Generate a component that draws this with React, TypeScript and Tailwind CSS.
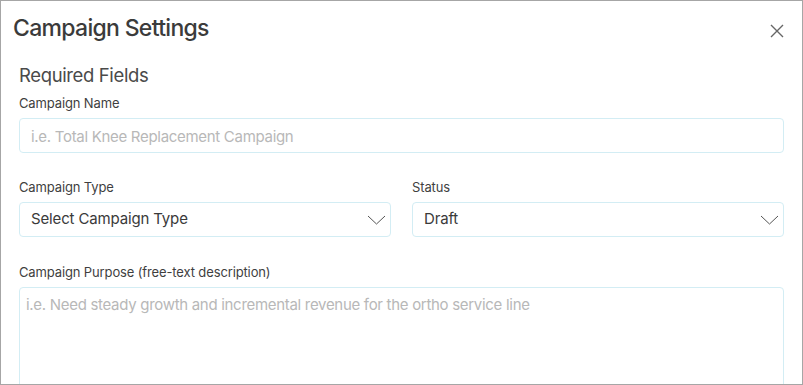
import React from "react";

const font = { fontFamily: "Inter, 'Noto Sans', sans-serif" };

const Label: React.FC<{ children: React.ReactNode }> = ({ children }) => (
  <label className="block text-[13px] leading-[16px] text-[#3f3f3f] tracking-[-0.01em] mb-[7px]">
    {children}
  </label>
);

const Chevron = () => (
  <svg width="19" height="10" viewBox="0 0 19 10" fill="none">
    <polyline points="1,1 9.5,9 18,1" stroke="#555" strokeWidth="1" />
  </svg>
);

const SelectBox: React.FC<{ value: string }> = ({ value }) => (
  <div className="flex items-center justify-between h-[35px] border border-[#d3edf4] rounded-[4px] pl-[11px] pr-[4px] bg-white">
    <span className="text-[15px] text-[#3a3a3a] tracking-[-0.01em]">{value}</span>
    <Chevron />
  </div>
);

export default function App() {
  return (
    <div
      style={font}
      className="w-[803px] h-[385px] overflow-hidden border border-[#a6a6a6] bg-white"
    >
      <div className="flex items-start justify-between pl-[12px] pr-[18px] pt-[10px]">
        <h1 className="text-[23px] leading-[34px] font-medium text-[#3b3b3b] tracking-[-0.03em]">
          Campaign Settings
        </h1>
        <button className="mt-[13px]">
          <svg width="14" height="14" viewBox="0 0 14 14">
            <path d="M1 1 L13 13 M13 1 L1 13" stroke="#666" strokeWidth="1.4" />
          </svg>
        </button>
      </div>

      <div className="px-[18px] pt-[19px]">
        <h2 className="text-[18.5px] leading-[22px] text-[#4a4a4a] tracking-[-0.02em] mb-[9px]">
          Required Fields
        </h2>

        <Label>Campaign Name</Label>
        <input
          placeholder="i.e. Total Knee Replacement Campaign"
          className="w-full h-[35px] border border-[#d3edf4] rounded-[4px] px-[11px] pt-[2px] text-[15px] tracking-[-0.02em] placeholder:text-[#b8b8b8] outline-none"
        />

        <div className="grid grid-cols-2 gap-[21px] mt-[26px]">
          <div>
            <Label>Campaign Type</Label>
            <SelectBox value="Select Campaign Type" />
          </div>
          <div>
            <Label>Status</Label>
            <SelectBox value="Draft" />
          </div>
        </div>

        <div className="mt-[27px]">
          <Label>Campaign Purpose (free-text description)</Label>
          <textarea
            placeholder="i.e. Need steady growth and incremental revenue for the ortho service line"
            className="w-full h-[140px] border border-[#d3edf4] rounded-[4px] px-[6px] py-[6px] text-[15px] tracking-[-0.02em] placeholder:text-[#b8b8b8] outline-none resize-none"
          />
        </div>
      </div>
    </div>
  );
}
